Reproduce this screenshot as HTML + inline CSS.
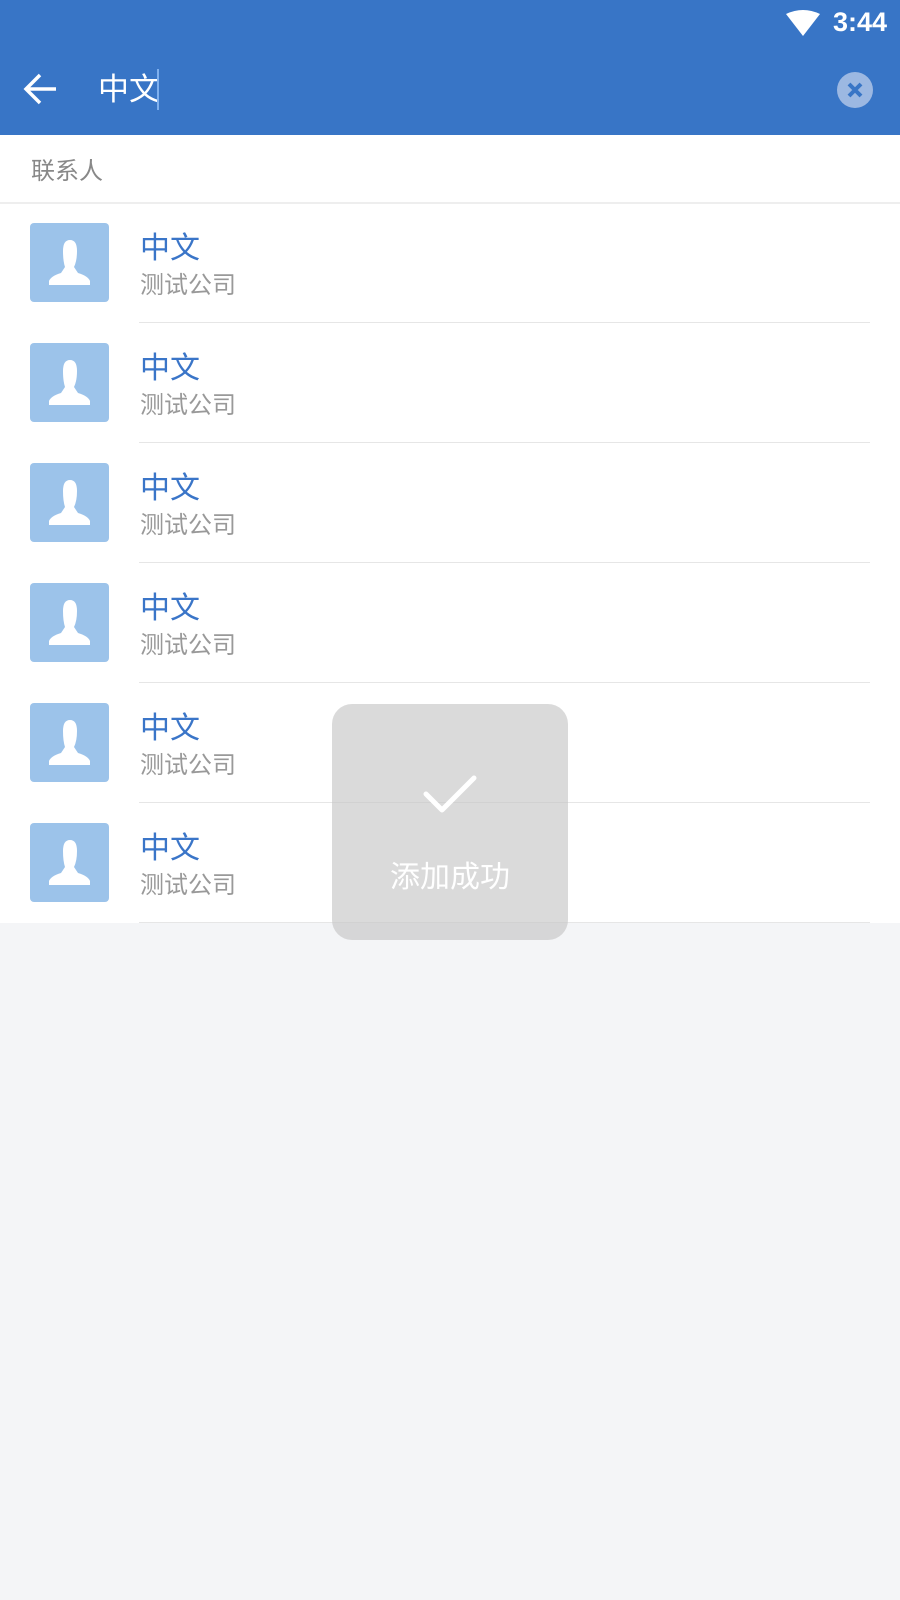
<!DOCTYPE html>
<html><head><meta charset="utf-8"><style>
*{margin:0;padding:0;box-sizing:border-box}
body{width:900px;height:1600px;background:#f4f5f7;font-family:"Liberation Sans","Noto Sans CJK SC",sans-serif;position:relative;overflow:hidden}
.top{position:absolute;left:0;top:0;width:900px;height:135px;background:#3875c6}
.list{position:absolute;left:0;top:135px;width:900px;height:788px;background:#fff}
.sec{position:absolute;left:31px;top:16px;font-size:24px;color:#888}
.secline{position:absolute;left:0;top:67px;width:900px;height:2px;background:#eee}
.row{position:absolute;left:0;width:900px;height:120px}
.av{position:absolute;left:30px;top:0;width:79px;height:79px;background:#9cc3ea;border-radius:4px}
.nm{position:absolute;left:140px;top:6px;font-size:30px;color:#3a75c8;line-height:40px}
.sub{position:absolute;left:140px;top:47px;font-size:24px;color:#999;line-height:32px}
.dv{position:absolute;left:139px;top:99px;width:731px;height:1px;background:#e6e6e6}
.toast{position:absolute;left:332px;top:704px;width:236px;height:236px;border-radius:20px;background:rgba(195,195,195,0.62)}
</style></head><body>
<div class="top">
<svg style="position:absolute;left:786px;top:10px" width="34" height="26" viewBox="0 0 34 26"><path d="M0 4 Q17 -4 34 4 L17 26 Z" fill="#fff"/></svg>
<div style="position:absolute;left:833px;top:7px;font-size:27px;font-weight:bold;color:#fff">3:44</div>
<svg style="position:absolute;left:22px;top:72px" width="36" height="36" viewBox="0 0 36 36"><path d="M34 17H4M18 3L4 17L18 31" stroke="#fff" stroke-width="3.5" fill="none"/></svg>
<div style="position:absolute;left:98px;top:68px;font-size:31px;color:#fff;line-height:44px">中文</div>
<div style="position:absolute;left:157px;top:69px;width:2px;height:41px;background:#7fb0ee"></div>
<div style="position:absolute;left:837px;top:72px;width:36px;height:36px;border-radius:50%;background:#9cb8e2"></div>
<svg style="position:absolute;left:837px;top:72px" width="36" height="36"><path d="M12 12L24 24M24 12L12 24" stroke="#3875c6" stroke-width="4"/></svg>
</div>
<div class="list">
<div class="sec">联系人</div><div class="secline"></div>
</div>
<div class="row" style="top:223px"><div class="av"><svg width="79" height="79" viewBox="0 0 79 79"><path d="M33 28 Q33 17 40 17 Q47 17 47 28 Q47 38 44 44 L48 50 Q58 53 60 58 L60 62 L19 62 L19 58 Q21 53 31 50 L35 44 Q33 38 33 28Z" fill="#fff"/></svg></div><div class="nm">中文</div><div class="sub">测试公司</div><div class="dv"></div></div>
<div class="row" style="top:343px"><div class="av"><svg width="79" height="79" viewBox="0 0 79 79"><path d="M33 28 Q33 17 40 17 Q47 17 47 28 Q47 38 44 44 L48 50 Q58 53 60 58 L60 62 L19 62 L19 58 Q21 53 31 50 L35 44 Q33 38 33 28Z" fill="#fff"/></svg></div><div class="nm">中文</div><div class="sub">测试公司</div><div class="dv"></div></div>
<div class="row" style="top:463px"><div class="av"><svg width="79" height="79" viewBox="0 0 79 79"><path d="M33 28 Q33 17 40 17 Q47 17 47 28 Q47 38 44 44 L48 50 Q58 53 60 58 L60 62 L19 62 L19 58 Q21 53 31 50 L35 44 Q33 38 33 28Z" fill="#fff"/></svg></div><div class="nm">中文</div><div class="sub">测试公司</div><div class="dv"></div></div>
<div class="row" style="top:583px"><div class="av"><svg width="79" height="79" viewBox="0 0 79 79"><path d="M33 28 Q33 17 40 17 Q47 17 47 28 Q47 38 44 44 L48 50 Q58 53 60 58 L60 62 L19 62 L19 58 Q21 53 31 50 L35 44 Q33 38 33 28Z" fill="#fff"/></svg></div><div class="nm">中文</div><div class="sub">测试公司</div><div class="dv"></div></div>
<div class="row" style="top:703px"><div class="av"><svg width="79" height="79" viewBox="0 0 79 79"><path d="M33 28 Q33 17 40 17 Q47 17 47 28 Q47 38 44 44 L48 50 Q58 53 60 58 L60 62 L19 62 L19 58 Q21 53 31 50 L35 44 Q33 38 33 28Z" fill="#fff"/></svg></div><div class="nm">中文</div><div class="sub">测试公司</div><div class="dv"></div></div>
<div class="row" style="top:823px"><div class="av"><svg width="79" height="79" viewBox="0 0 79 79"><path d="M33 28 Q33 17 40 17 Q47 17 47 28 Q47 38 44 44 L48 50 Q58 53 60 58 L60 62 L19 62 L19 58 Q21 53 31 50 L35 44 Q33 38 33 28Z" fill="#fff"/></svg></div><div class="nm">中文</div><div class="sub">测试公司</div><div class="dv"></div></div>
<div class="toast">
<svg style="position:absolute;left:88px;top:64px" width="64" height="50" viewBox="0 0 64 50"><path d="M6 26L22 42L54 10" stroke="#fff" stroke-width="5" fill="none" stroke-linecap="round" stroke-linejoin="round"/></svg>
<div style="position:absolute;left:0;width:236px;top:148px;text-align:center;font-size:30px;color:#fff">添加成功</div>
</div>
</body></html>
